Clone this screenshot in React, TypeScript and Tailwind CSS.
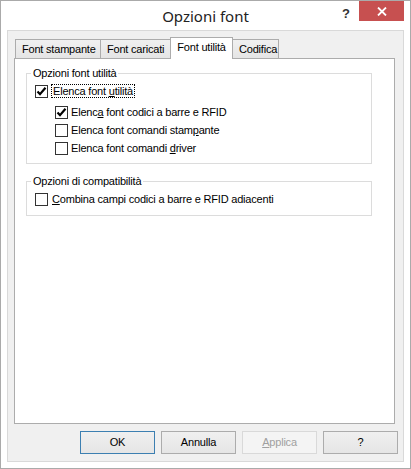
import React from "react";

function Check({ checked }: { checked?: boolean }) {
  return (
    <span className="w-[13px] h-[13px] shrink-0 border border-[#333333] bg-white flex items-center justify-center">
      {checked && (
        <svg width="11" height="11" viewBox="0 0 11 11">
          <path d="M1.5 5.5 L4 8.2 L9.5 1.8" fill="none" stroke="#000" strokeWidth="2.2" />
        </svg>
      )}
    </span>
  );
}

function Tab({ label, active, w }: { label: string; active?: boolean; w: string }) {
  return active ? (
    <div className={`${w} h-[22px] -ml-px -mb-px relative z-10 bg-white border border-b-0 border-[#acacac] flex items-start justify-center pt-[3px]`}>
      {label}
    </div>
  ) : (
    <div className={`${w} h-[19px] -ml-px first:ml-0 bg-gradient-to-b from-[#f0f0f0] to-[#e5e5e5] border border-b-0 border-[#acacac] flex items-center pl-[6px] pt-px`}>
      {label}
    </div>
  );
}

function Btn({ children, primary, disabled }: { children: React.ReactNode; primary?: boolean; disabled?: boolean }) {
  const border = primary ? "border-[#3c7fb1]" : disabled ? "border-[#d9d9d9]" : "border-[#acacac]";
  const bg = disabled ? "bg-[#f4f4f4]" : "bg-gradient-to-b from-[#f0f0f0] to-[#e5e5e5]";
  return (
    <div className={`w-[75px] h-[23px] border ${border} ${bg} flex items-center justify-center ${disabled ? "text-[#a0a0a0]" : ""}`}>
      {children}
    </div>
  );
}

export default function App() {
  return (
    <div className="w-[411px] h-[469px] bg-white border border-[#aaaaaa] flex flex-col font-['Liberation_Sans',sans-serif] text-[11px] tracking-[-0.2px] text-black leading-[13px]">
      {/* Title bar */}
      <div className="h-[29px] grid grid-cols-[1fr_auto_1fr] tracking-normal">
        <div />
        <div className="pt-[6px] text-[15px] leading-[18px] font-['Noto_Sans',sans-serif] text-[#222]">Opzioni font</div>
        <div className="flex justify-end items-start pr-[6px]">
          <span className="mt-[6px] mr-[9px] text-[13px] font-bold text-[#333]">?</span>
          <div className="w-[45px] h-[20px] bg-[#c75050] flex items-center justify-center">
            <svg width="10" height="9" viewBox="0 0 10 9">
              <path d="M1 0.5 L9 8.5 M9 0.5 L1 8.5" stroke="#fff" strokeWidth="1.8" />
            </svg>
          </div>
        </div>
      </div>

      {/* Client area */}
      <div className="mx-[6px] h-[432px] border border-[#d9d9d9] bg-[#f0f0f0] pt-[6px] pl-[6px] flex flex-col">
        <div className="flex items-end h-[21px] pl-px">
          <Tab label="Font stampante" w="w-[86px]" />
          <Tab label="Font caricati" w="w-[71px]" />
          <Tab label="Font utilità" w="w-[63px]" active />
          <Tab label="Codifica" w="w-[47px]" />
        </div>

        <div className="w-[381px] h-[366px] bg-white border border-[#acacac] pt-[8px] pl-[11px]">
          <fieldset className="w-[346px] border border-[#dcdcdc] pb-[6px]">
            <legend className="ml-[4px] px-[2px]">Opzioni font utilità</legend>
            <div className="pl-[8px]">
              <div className="h-[18px] flex items-center gap-[3px] mt-[2px]">
                <Check checked />
                <span className="border border-dotted border-black px-px leading-[12px]">
                  Elenca font <u>u</u>tilità
                </span>
              </div>
              <div className="pl-[20px] flex flex-col">
                <div className="h-[18px] flex items-center gap-[3px] mt-[3px]">
                  <Check checked />
                  <span>Elenc<u>a</u> font codici a barre e RFID</span>
                </div>
                <div className="h-[18px] flex items-center gap-[3px]">
                  <Check />
                  <span>Elenca font comandi stam<u>p</u>ante</span>
                </div>
                <div className="h-[18px] flex items-center gap-[3px]">
                  <Check />
                  <span>Elenca font comandi <u>d</u>river</span>
                </div>
              </div>
            </div>
          </fieldset>

          <fieldset className="w-[346px] mt-[11px] border border-[#dcdcdc] pb-[7px]">
            <legend className="ml-[4px] px-[2px]">Opzioni di compatibilità</legend>
            <div className="pl-[8px] h-[18px] flex items-center gap-[4px] mt-[2px]">
              <Check />
              <span><u>C</u>ombina campi codici a barre e RFID adiacenti</span>
            </div>
          </fieldset>
        </div>

        <div className="mt-[7px] flex gap-[6px] pl-[66px]">
          <Btn primary>OK</Btn>
          <Btn>Annulla</Btn>
          <Btn disabled><span><u>A</u>pplica</span></Btn>
          <Btn>?</Btn>
        </div>
      </div>
    </div>
  );
}
